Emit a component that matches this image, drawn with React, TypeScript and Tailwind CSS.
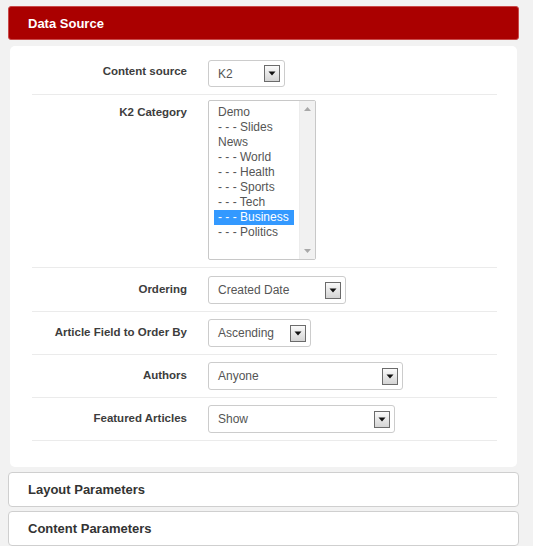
import React from "react";

function Arrow() {
  return (
    <div className="w-[16px] h-[17px] border border-[#6b6b6b] bg-gradient-to-b from-[#fafafa] to-[#d4d4d4] flex items-center justify-center shrink-0">
      <svg width="8" height="5" viewBox="0 0 8 5">
        <path d="M0.5 0.5 L7.5 0.5 L4 4.5 Z" fill="#111" />
      </svg>
    </div>
  );
}

function Select({ value, width, h = 28 }: { value: string; width: number; h?: number }) {
  return (
    <div
      className="border border-[#cccccc] rounded-[3px] bg-white flex items-center justify-between pl-[9px] pr-[4px] text-[12px] text-[#555]"
      style={{ width, height: h }}
    >
      <span>{value}</span>
      <Arrow />
    </div>
  );
}

function Row({
  label,
  children,
  top = 7,
  bottom = 7,
  labelH = 28,
}: {
  label: string;
  children: React.ReactNode;
  top?: number;
  bottom?: number;
  labelH?: number;
}) {
  return (
    <div className="flex items-start border-b border-[#ebebeb]" style={{ paddingTop: top, paddingBottom: bottom }}>
      <div
        className="w-[155px] flex items-center justify-end text-[11.5px] font-bold text-[#3d3d3d]"
        style={{ height: labelH }}
      >
        {label}
      </div>
      <div className="ml-[21px]">{children}</div>
    </div>
  );
}

const items = [
  "Demo",
  "- - - Slides",
  "News",
  "- - - World",
  "- - - Health",
  "- - - Sports",
  "- - - Tech",
  "- - - Business",
  "- - - Politics",
];

function ListBox() {
  return (
    <div className="w-[108px] h-[160px] border border-[#c8c8c8] rounded-[2px] bg-white flex">
      <div className="flex-1 px-[5px] pt-[4px]">
        {items.map((it, i) => (
          <div
            key={it}
            className={
              "h-[15px] leading-[15px] pl-[4px] text-[12px] whitespace-nowrap " +
              (i === 7 ? "bg-[#3399ff] text-white" : "text-[#555]")
            }
          >
            {it}
          </div>
        ))}
      </div>
      <div className="w-[16px] h-full bg-[#f1f1f1] border-l border-[#ececec] flex flex-col justify-between items-center py-[6px]">
        <svg width="7" height="4" viewBox="0 0 7 4">
          <path d="M0 4 L7 4 L3.5 0 Z" fill="#a8a8a8" />
        </svg>
        <svg width="7" height="4" viewBox="0 0 7 4">
          <path d="M0 0 L7 0 L3.5 4 Z" fill="#a8a8a8" />
        </svg>
      </div>
    </div>
  );
}

export default function App() {
  return (
    <div className="w-[533px] h-[546px] overflow-hidden bg-[#f2f2f2] pt-[6px] font-['Liberation_Sans',Arial,sans-serif]">
      <div className="ml-[8px] w-[511px]">
        <div className="h-[34px] bg-[#aa0000] border border-[#c94a4a] rounded-[3px] flex items-center pl-[19px] pt-[2px] text-white font-bold text-[13px]">
          Data Source
        </div>
        <div className="mt-[6px] mx-[2px] bg-white rounded-[5px] pt-[7px] pl-[22px] pr-[20px] pb-[26px]">
          <Row label="Content source" labelH={24}>
            <Select value="K2" width={77} h={27} />
          </Row>
          <Row label="K2 Category" top={5} labelH={26}>
            <ListBox />
          </Row>
          <Row label="Ordering" top={8}>
            <Select value="Created Date" width={138} />
          </Row>
          <Row label="Article Field to Order By">
            <Select value="Ascending" width={103} />
          </Row>
          <Row label="Authors">
            <Select value="Anyone" width={195} />
          </Row>
          <Row label="Featured Articles">
            <Select value="Show" width={187} />
          </Row>
        </div>
        <div className="mt-[5px] h-[35px] bg-white border border-[#cfcfcf] rounded-[4px] flex items-center pl-[19px] text-[13px] font-bold text-[#333]">
          Layout Parameters
        </div>
        <div className="mt-[4px] h-[35px] bg-white border border-[#cfcfcf] rounded-[4px] flex items-center pl-[19px] text-[13px] font-bold text-[#333]">
          Content Parameters
        </div>
      </div>
    </div>
  );
}
